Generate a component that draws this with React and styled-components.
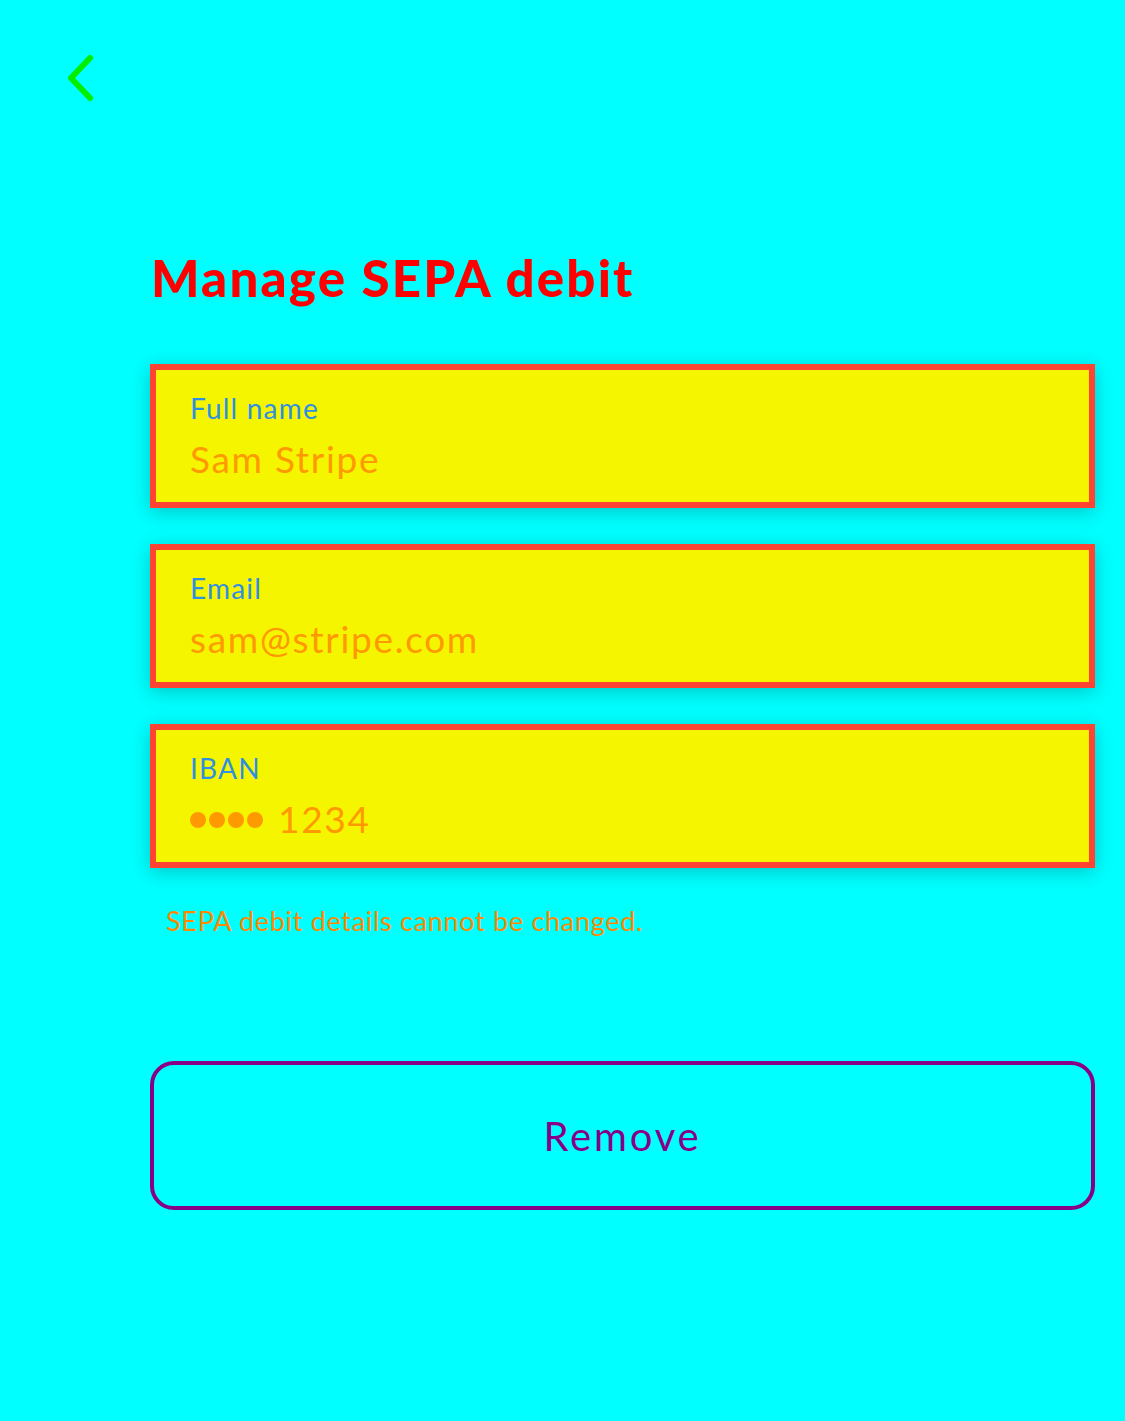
import React from 'react'
import styled, { createGlobalStyle } from 'styled-components'

const GlobalStyle = createGlobalStyle`
  html, body {
    margin: 0;
    padding: 0;
    background: #00ffff;
  }
  body {
    font-family: Lato, "Noto Sans", sans-serif;
  }
`

const fields = [
  { label: 'Full name', value: 'Sam Stripe' },
  { label: 'Email', value: 'sam@stripe.com' },
  { label: 'IBAN', value: '1234', masked: true },
]

function App() {
  return (
    <Page>
      <GlobalStyle />
      <TopBar>
        <BackButton aria-label="Back">
          <svg width="30" height="50" viewBox="0 0 30 50" fill="none">
            <path d="M24 5 L5 25 L24 45" stroke="#00ee00" strokeWidth="6" strokeLinecap="round" strokeLinejoin="round" />
          </svg>
        </BackButton>
      </TopBar>
      <Content>
        <Title>Manage SEPA debit</Title>
        <Fields>
          {fields.map((f) => (
            <Field key={f.label}>
              <Label>{f.label}</Label>
              <Value>
                {f.masked && (
                  <Dots>
                    <Dot /><Dot /><Dot /><Dot />
                  </Dots>
                )}
                {f.value}
              </Value>
            </Field>
          ))}
        </Fields>
        <Note>SEPA debit details cannot be changed.</Note>
        <RemoveButton>Remove</RemoveButton>
      </Content>
    </Page>
  )
}

export default App

const Page = styled.div`
  min-height: 1421px;
  background: #00ffff;
  display: flex;
  flex-direction: column;
`
const TopBar = styled.div`
  height: 120px;
  padding: 53px 0 0 66px;
  box-sizing: border-box;
`
const BackButton = styled.div`
  width: 30px;
  height: 50px;
  cursor: pointer;
`
const Content = styled.div`
  display: flex;
  flex-direction: column;
  padding: 0 30px 0 150px;
`
const Title = styled.h1`
  margin: 128px 0 0 1px;
  font-size: 51px;
  line-height: 60px;
  font-weight: 900;
  color: #ff0000;
  letter-spacing: 2.2px;
`
const Fields = styled.div`
  display: flex;
  flex-direction: column;
  gap: 36px;
  margin-top: 56px;
`
const Field = styled.div`
  height: 144px;
  box-sizing: border-box;
  border: 6px solid #ff4433;
  background: #f5f500;
  box-shadow: 0 4px 18px rgba(0, 0, 0, 0.22);
  padding: 20px 34px 0;
  display: flex;
  flex-direction: column;
`
const Label = styled.div`
  font-size: 28px;
  line-height: 36px;
  color: #2f8fe0;
  letter-spacing: 1.2px;
`
const Value = styled.div`
  margin-top: 11px;
  font-size: 37px;
  line-height: 44px;
  font-weight: 400;
  color: #ff9900;
  letter-spacing: 1.7px;
  display: flex;
  align-items: center;
`
const Dots = styled.span`
  display: flex;
  gap: 3px;
  margin-right: 15px;
  margin-top: 2px;
`
const Dot = styled.span`
  width: 16px;
  height: 16px;
  border-radius: 50%;
  background: #ff9900;
`
const Note = styled.div`
  margin: 36px 0 0 16px;
  font-size: 27px;
  line-height: 34px;
  color: #ff8800;
  letter-spacing: 0.7px;
`
const RemoveButton = styled.div`
  margin-top: 123px;
  height: 149px;
  box-sizing: border-box;
  border: 4px solid #880088;
  border-radius: 24px;
  display: flex;
  align-items: center;
  justify-content: center;
  font-size: 40px;
  color: #880088;
  letter-spacing: 2.8px;
  cursor: pointer;
`
